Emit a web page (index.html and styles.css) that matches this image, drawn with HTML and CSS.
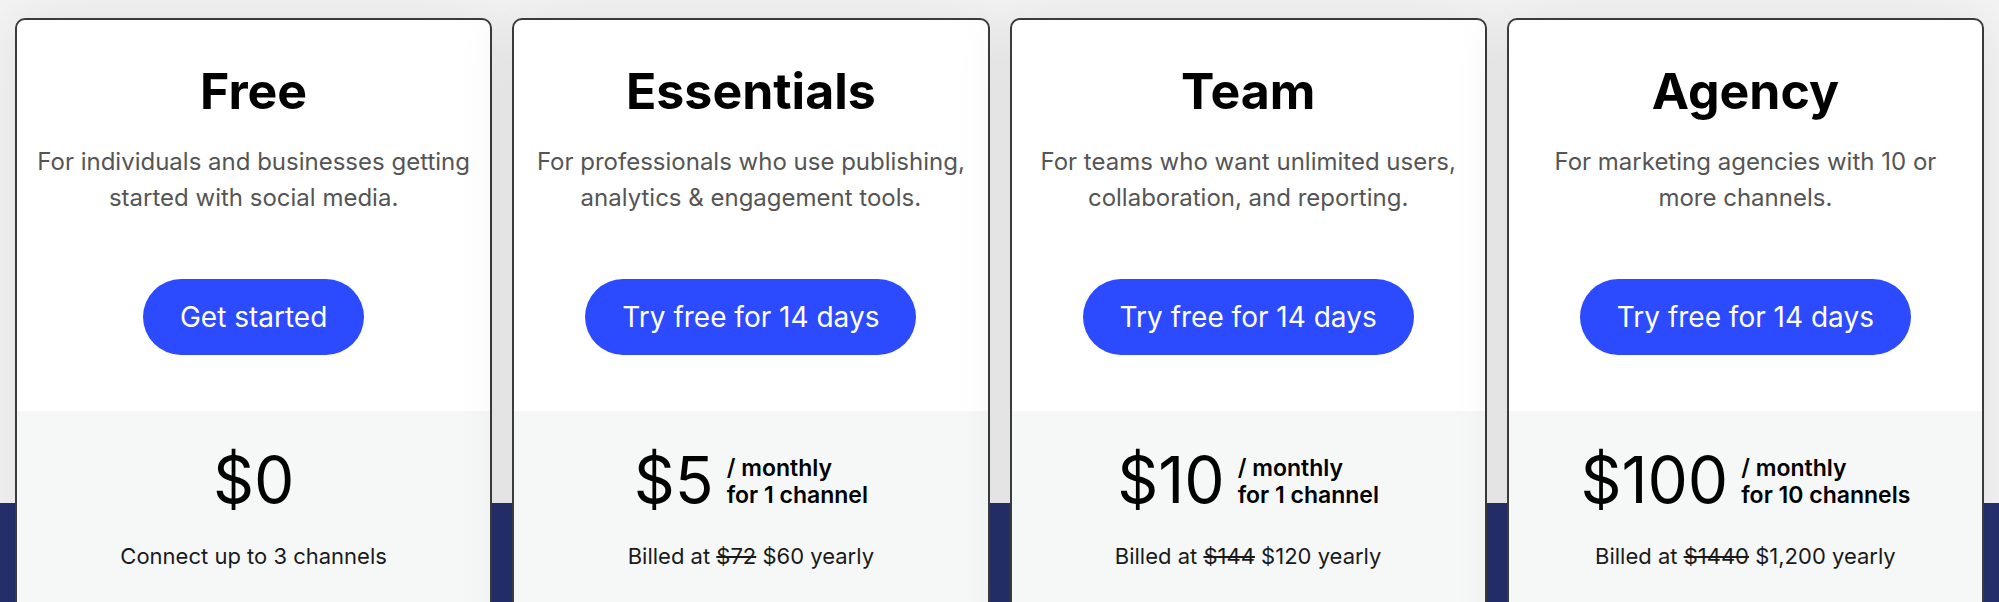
FILE: index.html
```html
<!DOCTYPE html>
<html lang="en">
<head>
<meta charset="utf-8">
<title>Pricing</title>
<link rel="stylesheet" href="styles.css">
</head>
<body>
<main class="pricing">
  <div class="plans">
    <article class="plan">
      <div class="plan-top">
        <h2 class="plan-name">Free</h2>
        <p class="plan-desc">For individuals and businesses getting<br>started with social media.</p>
        <div class="plan-action"><a class="plan-cta" href="#">Get started</a></div>
      </div>
      <div class="plan-bottom">
        <div class="price-row"><span class="price">$0</span></div>
        <p class="price-note">Connect up to 3 channels</p>
      </div>
    </article>
    <article class="plan">
      <div class="plan-top">
        <h2 class="plan-name">Essentials</h2>
        <p class="plan-desc">For professionals who use publishing,<br>analytics &amp; engagement tools.</p>
        <div class="plan-action"><a class="plan-cta" href="#">Try free for 14 days</a></div>
      </div>
      <div class="plan-bottom">
        <div class="price-row"><span class="price">$5</span><span class="price-unit">/ monthly<br>for 1 channel</span></div>
        <p class="price-note">Billed at <s>$72</s> $60 yearly</p>
      </div>
    </article>
    <article class="plan">
      <div class="plan-top">
        <h2 class="plan-name">Team</h2>
        <p class="plan-desc">For teams who want unlimited users,<br>collaboration, and reporting.</p>
        <div class="plan-action"><a class="plan-cta" href="#">Try free for 14 days</a></div>
      </div>
      <div class="plan-bottom">
        <div class="price-row"><span class="price">$10</span><span class="price-unit">/ monthly<br>for 1 channel</span></div>
        <p class="price-note">Billed at <s>$144</s> $120 yearly</p>
      </div>
    </article>
    <article class="plan">
      <div class="plan-top">
        <h2 class="plan-name">Agency</h2>
        <p class="plan-desc">For marketing agencies with 10 or<br>more channels.</p>
        <div class="plan-action"><a class="plan-cta" href="#">Try free for 14 days</a></div>
      </div>
      <div class="plan-bottom">
        <div class="price-row"><span class="price">$100</span><span class="price-unit">/ monthly<br>for 10 channels</span></div>
        <p class="price-note">Billed at <s>$1440</s> $1,200 yearly</p>
      </div>
    </article>
  </div>
</main>
</body>
</html>
```
FILE: styles.css
```css
html, body {
  margin: 0;
  padding: 0;
  overflow: hidden;
}

body {
  font-family: Inter, "Liberation Sans", sans-serif;
  color: #000;
}

.pricing {
  height: 602px;
  box-sizing: border-box;
  padding: 18px 15px 0 15px;
  background: linear-gradient(to bottom, #f4f4f4 0, #f4f4f4 503px, #26306d 503px, #26306d 100%);
  overflow: hidden;
}

.plans {
  display: grid;
  grid-template-columns: repeat(4, 1fr);
  gap: 20px;
}

.plan {
  background: #fff;
  border: 2px solid #3b3b3b;
  border-radius: 10px;
  overflow: hidden;
  box-shadow: 0 0 60px rgba(0, 0, 0, 0.09);
}

.plan-top {
  padding: 42px 8px 56px;
  text-align: center;
}

.plan-name {
  margin: 0;
  font-size: 50px;
  line-height: 58px;
  font-weight: 700;
  color: #000;
}

.plan-desc {
  margin: 24px 0 0;
  font-size: 24px;
  line-height: 36px;
  color: #555;
}

.plan-action {
  margin-top: 63px;
  display: flex;
  justify-content: center;
}

.plan-cta {
  display: block;
  height: 76px;
  line-height: 76px;
  padding: 0 37px;
  border-radius: 38px;
  background: #2c4bff;
  color: #fff;
  font-size: 28px;
  text-decoration: none;
}

.plan-bottom {
  background: #f6f8f8;
  padding: 37px 12px 80px;
  text-align: center;
}

.price-row {
  display: flex;
  justify-content: center;
  align-items: last baseline;
  gap: 13px;
}

.price {
  font-size: 64px;
  line-height: 64px;
  font-weight: 400;
}

.price-unit {
  font-size: 23px;
  line-height: 27px;
  font-weight: 600;
  text-align: left;
}

.price-note {
  margin: 29px 0 0;
  font-size: 22px;
  line-height: 30px;
  color: #1a1a1a;
}
```
